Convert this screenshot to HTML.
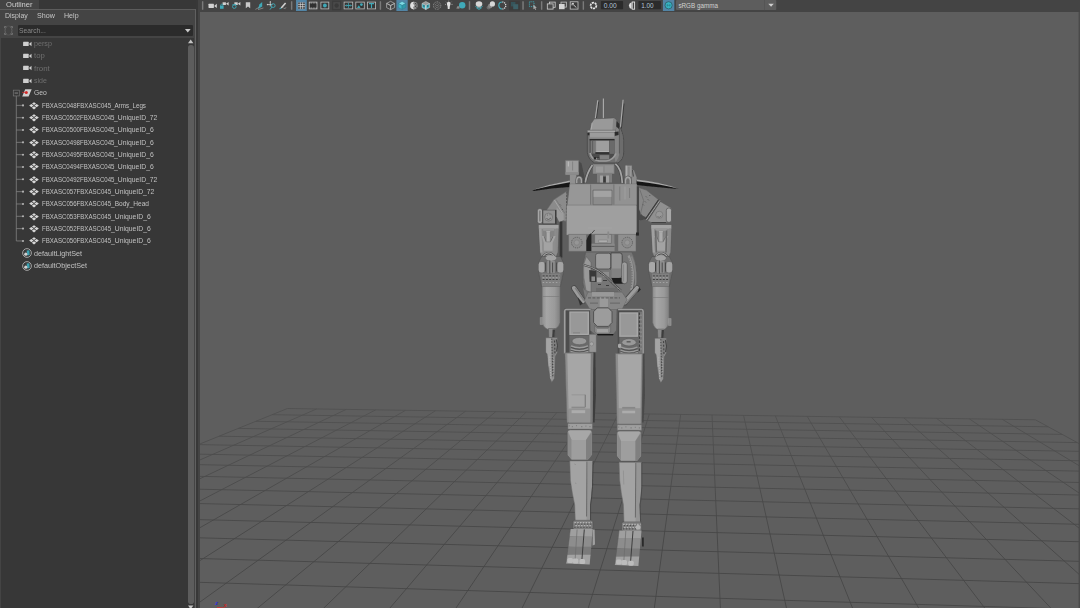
<!DOCTYPE html>
<html><head><meta charset="utf-8"><title>Outliner</title>
<style>
html,body{margin:0;padding:0;}
body{width:1080px;height:608px;overflow:hidden;background:#5e5e5e;position:relative;font-family:"Liberation Sans",sans-serif;font-size:7.5px;color:#c8c8c8;}
#vp{position:absolute;left:200px;top:11.5px;width:880px;height:596.5px;background:#5e5e5e;overflow:hidden;}
#vp svg{display:block;}
#tb{position:absolute;left:200px;top:0;width:880px;height:11.5px;background:#444;overflow:hidden;}
#tb svg{display:block;position:absolute;left:0;top:0;}
#lp{position:absolute;left:0;top:0;width:200px;height:608px;background:#444;overflow:hidden;}
#lp .topbar{position:absolute;left:0;top:0;width:197.9px;height:9.2px;background:#373737;}
#lp .tab{position:absolute;left:0;top:0;width:38.8px;height:9px;background:#444;}
#lp .tab span{position:absolute;top:-0.2px;line-height:9px;color:#cecece;white-space:nowrap;transform-origin:0 50%;}
#lp .hline{position:absolute;left:0;top:9px;width:196px;height:1px;background:#5c5c5c;}
#lp .vline{position:absolute;left:194.9px;top:9px;width:1.3px;height:599px;background:#606060;}
#lp .gap{position:absolute;left:196.2px;top:0;width:1.7px;height:608px;background:#383838;}
#lp .menu{position:absolute;left:0;top:10.1px;height:11px;line-height:11px;font-size:7.6px;color:#c6c6c6;white-space:nowrap;}
#lp .menu span{position:absolute;top:0;transform-origin:0 50%;}
#lp .sicon{position:absolute;left:2.5px;top:25px;}
#lp .search{position:absolute;left:17.5px;top:25.2px;width:175.6px;height:10.6px;background:#2b2b2b;border-radius:1px;}
#lp .search span{position:absolute;top:1.3px;line-height:10.6px;color:#8a8a8a;transform-origin:0 50%;white-space:nowrap;}
#lp .search i{position:absolute;right:2.6px;top:3.8px;width:0;height:0;border-left:2.9px solid transparent;border-right:2.9px solid transparent;border-top:3.6px solid #c4c4c4;}
#lp .list{position:absolute;left:1.2px;top:37.8px;width:192.5px;height:570.2px;background:#373737;}
#lp .sb{position:absolute;left:188.1px;top:45.3px;width:5.7px;height:558.6px;background:#5d5d5d;border-radius:2.8px;}
#lp .up{position:absolute;left:187.9px;top:39.6px;width:0;height:0;border-left:2.8px solid transparent;border-right:2.8px solid transparent;border-bottom:3.4px solid #c4c4c4;}
#lp .dn{position:absolute;left:187.9px;top:605.6px;width:0;height:0;border-left:2.8px solid transparent;border-right:2.8px solid transparent;border-top:3.4px solid #c4c4c4;}
.row{position:absolute;left:0;height:12.3px;line-height:12.3px;white-space:nowrap;font-size:7.45px;color:#c2c2c2;}
.row span{position:absolute;top:0.5px;transform-origin:0 50%;}
.row.dim{color:#6f6f6f;}
.row svg{position:absolute;}
#tree{position:absolute;left:0;top:0;}

</style></head>
<body>
<div id="vp">
<svg width="880" height="597" viewBox="200 11.5 880 597">
<defs>
<linearGradient id="cyl" x1="0" x2="1" y1="0" y2="0"><stop offset="0" stop-color="#8e8e8e"/><stop offset="0.25" stop-color="#a6a6a6"/><stop offset="0.7" stop-color="#9a9a9a"/><stop offset="1" stop-color="#808080"/></linearGradient>
<filter id="soft" x="-5%" y="-5%" width="110%" height="110%"><feGaussianBlur stdDeviation="0.35"/></filter>
<linearGradient id="gridg" gradientUnits="userSpaceOnUse" x1="0" y1="405" x2="0" y2="540"><stop offset="0" stop-color="#505050"/><stop offset="1" stop-color="#454545"/></linearGradient>
</defs>
<g stroke="url(#gridg)" stroke-width="0.85" fill="none"><line x1="287.4" y1="408.0" x2="150.0" y2="463.7"/><line x1="316.7" y1="408.4" x2="150.0" y2="481.3"/><line x1="346.2" y1="408.9" x2="150.0" y2="501.9"/><line x1="375.8" y1="409.3" x2="150.0" y2="526.3"/><line x1="405.6" y1="409.8" x2="150.0" y2="555.7"/><line x1="435.5" y1="410.2" x2="150.0" y2="591.9"/><line x1="465.6" y1="410.7" x2="150.0" y2="637.4"/><line x1="495.8" y1="411.1" x2="218.3" y2="640.0"/><line x1="526.2" y1="411.6" x2="290.3" y2="640.0"/><line x1="556.8" y1="412.1" x2="362.2" y2="640.0"/><line x1="587.5" y1="412.5" x2="434.1" y2="640.0"/><line x1="618.4" y1="413.0" x2="506.0" y2="640.0"/><line x1="649.4" y1="413.4" x2="578.0" y2="640.0"/><line x1="680.7" y1="413.9" x2="649.9" y2="640.0"/><line x1="712.0" y1="414.4" x2="721.8" y2="640.0"/><line x1="743.6" y1="414.9" x2="793.7" y2="640.0"/><line x1="775.3" y1="415.3" x2="865.6" y2="640.0"/><line x1="807.2" y1="415.8" x2="937.5" y2="640.0"/><line x1="839.3" y1="416.3" x2="1009.4" y2="640.0"/><line x1="871.5" y1="416.8" x2="1081.3" y2="640.0"/><line x1="903.9" y1="417.3" x2="1130.0" y2="619.3"/><line x1="936.5" y1="417.8" x2="1130.0" y2="566.8"/><line x1="969.3" y1="418.3" x2="1130.0" y2="527.0"/><line x1="1002.2" y1="418.8" x2="1130.0" y2="495.9"/><line x1="1035.4" y1="419.3" x2="1130.0" y2="470.8"/><line x1="287.4" y1="408.0" x2="1035.4" y2="419.3"/><line x1="272.2" y1="414.2" x2="1048.3" y2="426.3"/><line x1="255.8" y1="420.8" x2="1062.2" y2="433.9"/><line x1="238.2" y1="427.9" x2="1077.3" y2="442.1"/><line x1="219.1" y1="435.7" x2="1093.8" y2="451.1"/><line x1="198.4" y1="444.1" x2="1111.8" y2="460.9"/><line x1="175.8" y1="453.2" x2="1130.0" y2="471.6"/><line x1="151.1" y1="463.2" x2="1130.0" y2="483.0"/><line x1="150.0" y1="474.8" x2="1130.0" y2="495.6"/><line x1="150.0" y1="487.6" x2="1130.0" y2="509.5"/><line x1="150.0" y1="501.9" x2="1130.0" y2="525.0"/><line x1="150.0" y1="517.9" x2="1130.0" y2="542.5"/><line x1="150.0" y1="536.0" x2="1130.0" y2="562.2"/><line x1="150.0" y1="556.6" x2="1130.0" y2="584.6"/><line x1="150.0" y1="580.3" x2="1130.0" y2="610.4"/><line x1="150.0" y1="607.8" x2="1121.2" y2="640.0"/></g>
<g filter="url(#soft)"><g id="robot" stroke-linejoin="round">
<!-- antennas -->
<line x1="598.7" y1="101" x2="596.5" y2="117.6" stroke="#3c3c3c" stroke-width="1"/>
<line x1="624" y1="103" x2="621.4" y2="128" stroke="#3c3c3c" stroke-width="1"/>
<g stroke="#adadad" stroke-width="1.1" fill="none">
<line x1="597.8" y1="99.8" x2="595.3" y2="118"/>
<line x1="603.4" y1="97.9" x2="603.4" y2="118"/>
<line x1="623.1" y1="99.2" x2="620.3" y2="128.2"/>
</g>
<!-- head shell -->
<path d="M587.3 131 L587.3 152 Q588.5 159.5 594.7 162.5 L618 162.5 Q623.7 159 623.7 151.4 L623.7 139.6 Q622.5 128 616.5 121.5 L615.5 131 Z" fill="#6f6f6f" stroke="#484848" stroke-width="0.9"/>
<path d="M614.4 131 L616.4 122.5 Q619.6 127 619.4 139 L619.4 152 Q619 158 615.5 161.5 L614.4 156 Z" fill="#858585"/>
<path d="M619.4 128 Q623 133 623.2 140 L623.2 151 Q623 157 619 160.8 L619.4 152 Z" fill="#6c6c6c"/>
<path d="M619.4 127 L619.4 153" stroke="#4c4c4c" stroke-width="0.6"/>
<!-- cap -->
<path d="M589.7 129.9 L591.2 122.8 L594.2 118.4 L613.4 117.4 Q616.4 118.6 616.8 121.3 L615.4 130.2 Z" fill="#999" stroke="#585858" stroke-width="0.6"/>
<path d="M613.2 117.6 Q616.4 118.6 616.6 121.3 L615.4 130 L612.4 130 Z" fill="#868686"/>
<path d="M592.2 122.8 L591 129.8" stroke="#b4b4b4" stroke-width="0.7"/>
<path d="M616.6 120.4 L619.4 123.4 L619 128.5 L616.2 126 Z" fill="#2e2e2e"/>
<!-- brim -->
<rect x="587.3" y="129.7" width="28.2" height="2.5" fill="#a6a6a6" stroke="#5a5a5a" stroke-width="0.5"/>
<rect x="587.6" y="132.2" width="2.2" height="2.6" fill="#2c2c2c"/>
<path d="M614.6 131.6 L618.6 131 L618.6 134.6 L614.6 135.4 Z" fill="#2c2c2c"/>
<!-- visor -->
<rect x="589.7" y="132.2" width="24.7" height="6.4" fill="#9c9c9c"/>
<rect x="589.7" y="136.4" width="24.7" height="2.2" fill="#8e8e8e"/>
<!-- face cavity -->
<path d="M589.7 138.6 L614.4 138.6 L614.4 154 Q612 158.5 607 159.3 L597 159.3 Q591 158 589.7 152 Z" fill="#4c4c4c"/>
<rect x="589.7" y="138.4" width="24.7" height="1.6" fill="#2a2a2a"/>
<rect x="590.6" y="140" width="5" height="13" fill="#787878"/>
<path d="M592.6 140 V153" stroke="#505050" stroke-width="0.7"/>
<rect x="609.2" y="140" width="5.2" height="13.4" fill="#6a6a6a"/>
<rect x="595.8" y="140.1" width="13.2" height="11.3" fill="#9e9e9e"/>
<rect x="595.8" y="150.6" width="13.2" height="1" fill="#b2b2b2"/>
<path d="M595.8 140.1 V151.4" stroke="#8a8a8a" stroke-width="0.6"/>
<rect x="595.4" y="151.8" width="14" height="1.6" fill="#303030"/>
<path d="M590 152.5 Q592 159.6 599 160.3 L606 160.5 Q613 160 616 153" fill="none" stroke="#9a9a9a" stroke-width="1.7"/>
<rect x="593.8" y="156.6" width="5.6" height="2.4" fill="#262626"/>
<rect x="599.6" y="154.6" width="9.6" height="4.4" fill="#808080"/>
<rect x="596" y="157.2" width="0.8" height="1.8" fill="#aaa"/><rect x="597.6" y="157.2" width="0.8" height="1.8" fill="#aaa"/>
<!-- neck -->
<rect x="592.6" y="163.5" width="22" height="10" fill="#8b8b8b" stroke="#5a5a5a" stroke-width="0.5"/>
<rect x="596" y="166" width="7" height="6" fill="#9a9a9a"/>
<rect x="605" y="165" width="8" height="7" fill="#939393"/>
<rect x="597" y="173.5" width="15" height="8.5" fill="#7c7c7c"/>
<rect x="600" y="175" width="3" height="7" fill="#a0a0a0"/>
<rect x="606" y="175" width="3" height="7" fill="#a0a0a0"/>
<rect x="603.2" y="176" width="2.6" height="6" fill="#3a3a3a"/>
<!-- cables -->
<path d="M592.4 164.4 Q587 172 585.2 182" fill="none" stroke="#484848" stroke-width="3.2"/>
<path d="M592.4 164.4 Q587 172 585.2 182" fill="none" stroke="#a4a4a4" stroke-width="1.8"/>
<path d="M615.4 163.4 Q621.6 168 622.3 182.6" fill="none" stroke="#484848" stroke-width="3.2"/>
<path d="M615.4 163.4 Q621.6 168 622.3 182.6" fill="none" stroke="#a4a4a4" stroke-width="1.8"/>
<!-- left shoulder box -->
<path d="M578.7 160.6 L581.5 163 L584.4 176 L584.4 183 L578.7 183 Z" fill="#484848"/>
<rect x="565.4" y="159.9" width="13.3" height="14.3" fill="#9c9c9c" stroke="#6a6a6a" stroke-width="0.5"/>
<line x1="568.3" y1="161" x2="568.3" y2="166" stroke="#c4c4c4" stroke-width="0.9"/>
<line x1="572.6" y1="161" x2="572.6" y2="170" stroke="#7c7c7c" stroke-width="0.8"/>
<rect x="565.6" y="171.6" width="13" height="2.6" fill="#8c8c8c"/>
<path d="M569.9 174.2 L576.3 174.2 L577 184 L569.9 184 Z" fill="#909090"/>
<path d="M575.6 183 L575.6 179.4 Q575.8 175.4 579 175.4 Q582.4 175.4 582.6 179.4 L582.6 183 Z" fill="#a4a4a4" stroke="#4e4e4e" stroke-width="0.6"/>
<path d="M577.4 183 L577.4 180 Q577.6 177.6 579.1 177.6 Q580.6 177.6 580.8 180 L580.8 183 Z" fill="#6a6a6a"/>
<!-- right pegs -->
<path d="M631.6 168.8 L634 170 L636.6 177 L636.6 184.6 L631.6 184.6 Z" fill="#8c8c8c"/>
<path d="M632.4 169.5 L633.4 176" stroke="#3e3e3e" stroke-width="0.9"/>
<rect x="625.4" y="164.9" width="6.6" height="12" fill="#989898" stroke="#666" stroke-width="0.5"/>
<rect x="627.6" y="166" width="2.2" height="10" fill="#848484"/>
<rect x="625.6" y="165.2" width="1.6" height="11" fill="#ababab"/>
<path d="M624.3 184 L624.3 179.4 Q624.6 175.4 627.9 175.4 Q631.3 175.4 631.5 179.4 L631.5 184 Z" fill="#a4a4a4" stroke="#4e4e4e" stroke-width="0.6"/>
<path d="M626.2 184 L626.2 180 Q626.4 177.8 627.9 177.8 Q629.4 177.8 629.6 180 L629.6 184 Z" fill="#707070"/>
<!-- blades -->
<path d="M532.4 189.7 Q551 183.6 569.9 180.3 L569.6 186.6 Q551 187.6 534 190.6 Z" fill="#181818"/>
<path d="M532.4 189.6 Q551 183.4 569.9 180.1 L569.9 181.7 Q551 184.8 532.4 189.6 Z" fill="#acacac"/>
<path d="M636.6 179.5 Q660 181.8 679 188.4 Q660 187.4 636.6 184.6 Z" fill="#181818"/>
<path d="M636.6 179.1 Q660 181.4 679 188.4 Q660 183.6 636.6 180.8 Z" fill="#a8a8a8"/>
<!-- left shoulder -->
<path d="M567 190.6 L553.7 199.3 L546.5 209.8 L556.4 209.8 L562 219.6 L567.4 221.4 Z" fill="#8b8b8b" stroke="#666" stroke-width="0.5"/>
<path d="M554.4 199.6 L563.4 214" stroke="#a6a6a6" stroke-width="1"/>
<path d="M556 199 L565 213" stroke="#727272" stroke-width="0.7"/>
<path d="M566.8 191 L566.2 221" stroke="#4e4e4e" stroke-width="0.9" stroke-dasharray="2.2 1"/>
<path d="M560 204 l0.8 0.8 M562 208.6 l0.8 0.8" stroke="#444" stroke-width="0.8"/>
<!-- right shoulder -->
<path d="M638.6 187 L646.4 189.6 L658.4 199 L645 218.6 Q641 220.6 638.6 219.6 Z" fill="#878787" stroke="#585858" stroke-width="0.5"/>
<path d="M638.8 208 Q641 216 646 216.6 L644.6 218.8 Q641 220.6 638.8 219.4 Z" fill="#484848"/>
<path d="M639.8 189 L643.6 200 L640.4 214" fill="none" stroke="#6c6c6c" stroke-width="0.8"/>
<path d="M646 196 l0.8 0.8 M648 199 l0.8 0.8 M645 201 l0.8 0.8 M649.4 194.6 l0.8 0.8 M643 204 l0.8 0.8" stroke="#3e3e3e" stroke-width="0.8"/>
<path d="M658.6 199.2 L645.2 218.8" stroke="#363636" stroke-width="1"/>
<path d="M659.8 200 L646.4 219.6" stroke="#a8a8a8" stroke-width="0.9"/>
<path d="M660.6 200.6 L647.2 220.2" stroke="#444" stroke-width="0.7"/>
<!-- chest -->
<path d="M569.9 183.6 L636.6 183.6 L636.6 234.4 L566.4 234.4 L566.9 204.3 L567.4 204.3 Z" fill="#9a9a9a" stroke="#6a6a6a" stroke-width="0.6"/>
<rect x="636.6" y="186" width="2.4" height="49" fill="#444"/>
<path d="M570.2 184 L590.6 184 L590.6 204.3 L567.8 204.3 Z" fill="#979797"/>
<rect x="613.9" y="184" width="22.7" height="20.3" fill="#929292"/>
<rect x="590.6" y="184" width="23.3" height="20.3" fill="#8f8f8f"/>
<rect x="593" y="189.6" width="19" height="14.7" fill="#8c8c8c" stroke="#5c5c5c" stroke-width="0.6"/>
<rect x="593.6" y="190.2" width="17.8" height="6.2" fill="#a3a3a3"/>
<line x1="590.6" y1="184" x2="590.6" y2="204.3" stroke="#666" stroke-width="0.7"/>
<line x1="613.9" y1="184" x2="613.9" y2="204.3" stroke="#666" stroke-width="0.7"/>
<rect x="619.8" y="185.6" width="10.8" height="13" fill="#939393"/>
<line x1="619.8" y1="186" x2="619.8" y2="200" stroke="#6c6c6c" stroke-width="0.6"/>
<line x1="625" y1="186" x2="625" y2="199" stroke="#a8a8a8" stroke-width="0.6"/>
<line x1="629.6" y1="188" x2="629.6" y2="197" stroke="#5a5a5a" stroke-width="0.9" stroke-dasharray="1 1"/>
<line x1="567" y1="204.6" x2="636.6" y2="204.6" stroke="#787878" stroke-width="0.8"/>
<rect x="566.9" y="205.2" width="69.6" height="28.8" fill="#9f9f9f"/>
<line x1="588" y1="227.5" x2="612" y2="227.5" stroke="#aaa" stroke-width="0.6"/>
<!-- arm joints -->
<rect x="537.3" y="208.1" width="5.2" height="15" rx="2.2" fill="#a6a6a6" stroke="#4a4a4a" stroke-width="0.6"/>
<rect x="539" y="210" width="1.6" height="11" rx="0.8" fill="#7e7e7e"/>
<rect x="542.6" y="209.4" width="14" height="14.6" fill="#3e3e3e"/>
<rect x="543.2" y="209.8" width="11.8" height="13.2" fill="#929292"/>
<circle cx="548.6" cy="216.6" r="4" fill="#9a9a9a" stroke="#6a6a6a" stroke-width="0.6"/>
<path d="M546.4 218 Q548.6 220.4 551 217.4" fill="none" stroke="#4a4a4a" stroke-width="0.7"/>
<path d="M547 214.6 h0.8 M549.6 214.2 h0.8" stroke="#555" stroke-width="0.8"/>
<path d="M556.6 207 L563.6 214.6 L563.6 219.6 L559.4 222 L556.6 216 Z" fill="#9c9c9c"/>
<path d="M660.4 201 L671.4 207.4 L671.4 222 L651.2 222 L647.6 220.4 Z" fill="#909090" stroke="#585858" stroke-width="0.5"/>
<rect x="666.3" y="207.6" width="5.2" height="14.2" rx="2.2" fill="#a8a8a8" stroke="#4a4a4a" stroke-width="0.6"/>
<circle cx="659.3" cy="214.3" r="3.6" fill="#979797" stroke="#707070" stroke-width="0.6"/>
<path d="M657.4 216 Q659.4 218 661.4 215.4" fill="none" stroke="#555" stroke-width="0.6"/>
<path d="M651.4 222 H666" stroke="#3e3e3e" stroke-width="0.9"/>
<!-- upper arms -->
<rect x="559.6" y="221" width="2.7999999999999545" height="36" fill="#363636"/>
<path d="M538.5 224.2 L558.8 224.2 L557.8 252 L555.8 257.5 L541.9 257.5 L539.9 252 Z" fill="#8c8c8c" stroke="#555" stroke-width="0.5"/>
<rect x="538.8" y="224.5" width="19.699999999999953" height="3.6" fill="#a4a4a4"/>
<path d="M538.9 228 L541.5 228 L542.5 252 L540.3 252 Z" fill="#a0a0a0"/>
<path d="M558.4 228 L556.1999999999999 228 L555.4 252 L557.4 252 Z" fill="#8a8a8a"/>
<rect x="542.7" y="228.4" width="11.699999999999955" height="8" fill="#848484"/>
<rect x="543.1" y="228.8" width="10.899999999999954" height="1.2" fill="#a0a0a0"/>
<path d="M541.7 235.6 L543.85 242.4 L543.85 250.2 L552.65 250.2 L552.65 242.4 L555.5999999999999 235.6 L555.4 250 L542.3 250 Z" fill="#8e8e8e"/>
<path d="M541.7 235.4 L544.1 235.4 L546.25 241.4 L550.25 241.4 L553.1999999999999 235.4 L555.5999999999999 235.4 L552.65 242.6 L552.65 250.2 L543.85 250.2 L543.85 242.6 Z" fill="#a3a3a3"/>
<path d="M544.3 236 L546.05 241.2 M553.0 236 L550.45 241.2" stroke="#5a5a5a" stroke-width="0.7" fill="none"/>
<rect x="546.25" y="231.4" width="4" height="10" fill="#acacac" stroke="#6a6a6a" stroke-width="0.4"/>
<rect x="546.25" y="230.8" width="4" height="0.9" fill="#c0c0c0"/>
<path d="M541.9 257.6 Q548.25 247.6 555.8 257.6" fill="none" stroke="#3e3e3e" stroke-width="2.2"/>
<path d="M542.3 257 Q548.25 247.8 555.4 257" fill="none" stroke="#a4a4a4" stroke-width="1.1"/>
<path d="M651 224.2 L671.6 224.2 L670.6 252 L668.6 257.5 L654.4 257.5 L652.4 252 Z" fill="#8c8c8c" stroke="#555" stroke-width="0.5"/>
<rect x="651.3" y="224.5" width="20.00000000000002" height="3.6" fill="#a4a4a4"/>
<path d="M651.4 228 L654 228 L655 252 L652.8 252 Z" fill="#a0a0a0"/>
<path d="M671.2 228 L669.0 228 L668.2 252 L670.2 252 Z" fill="#8a8a8a"/>
<rect x="655.2" y="228.4" width="12.000000000000023" height="8" fill="#848484"/>
<rect x="655.6" y="228.8" width="11.200000000000022" height="1.2" fill="#a0a0a0"/>
<path d="M654.2 235.6 L656.5 242.4 L656.5 250.2 L665.3 250.2 L665.3 242.4 L668.4 235.6 L668.2 250 L654.8 250 Z" fill="#8e8e8e"/>
<path d="M654.2 235.4 L656.6 235.4 L658.9 241.4 L662.9 241.4 L666.0 235.4 L668.4 235.4 L665.3 242.6 L665.3 250.2 L656.5 250.2 L656.5 242.6 Z" fill="#a3a3a3"/>
<path d="M656.8 236 L658.6999999999999 241.2 M665.8000000000001 236 L663.1 241.2" stroke="#5a5a5a" stroke-width="0.7" fill="none"/>
<rect x="658.9" y="231.4" width="4" height="10" fill="#acacac" stroke="#6a6a6a" stroke-width="0.4"/>
<rect x="658.9" y="230.8" width="4" height="0.9" fill="#c0c0c0"/>
<path d="M654.4 257.6 Q660.9 247.6 668.6 257.6" fill="none" stroke="#3e3e3e" stroke-width="2.2"/>
<path d="M654.8 257 Q660.9 247.8 668.2 257" fill="none" stroke="#a4a4a4" stroke-width="1.1"/>
<path d="M655.6 230 L656.4 252 M666.6 230 L666 252" stroke="#686868" stroke-width="1.5" fill="none"/>
<!-- elbows -->
<path d="M541.6 256 L560.4 256 L563.4 262 L563.4 272 L560.4 286 L541.6 286 L538.6 272 L538.6 262 Z" fill="#6e6e6e" stroke="#4c4c4c" stroke-width="0.5"/>
<rect x="538.6" y="261.5" width="6.4" height="10.5" rx="2.4" fill="#a8a8a8"/>
<rect x="557.0" y="261.5" width="6.4" height="10.5" rx="2.4" fill="#a4a4a4"/>
<ellipse cx="551.0" cy="257.6" rx="5.4" ry="2.8" fill="#a2a2a2"/>
<rect x="547.2" y="260.4" width="7.6" height="12" fill="#8e8e8e"/>
<path d="M549.8 260 V274 M552.6 262 V272" stroke="#3a3a3a" stroke-width="0.8"/>
<path d="M545.2 262 V271 M556.8 262 V271" stroke="#333" stroke-width="0.8"/>
<path d="M541.6 273 L560.4 273 L560.0 286 L542.0 286 Z" fill="#808080"/>
<path d="M542.6 275.4 H559.4 M542.6 279 H559.4" stroke="#3c3c3c" stroke-width="0.9" stroke-dasharray="2 1.3"/>
<path d="M542.6 277.2 H559.4 M542.6 282 H559.4" stroke="#a6a6a6" stroke-width="0.9" stroke-dasharray="1.6 1.7"/>
<path d="M651.9 256 L669.3 256 L672.3 262 L672.3 272 L669.3 286 L651.9 286 L648.9 272 L648.9 262 Z" fill="#6e6e6e" stroke="#4c4c4c" stroke-width="0.5"/>
<rect x="648.9" y="261.5" width="6.4" height="10.5" rx="2.4" fill="#a8a8a8"/>
<rect x="665.9" y="261.5" width="6.4" height="10.5" rx="2.4" fill="#a4a4a4"/>
<ellipse cx="660.5999999999999" cy="257.6" rx="5.4" ry="2.8" fill="#a2a2a2"/>
<rect x="656.8" y="260.4" width="7.6" height="12" fill="#8e8e8e"/>
<path d="M659.3999999999999 260 V274 M662.1999999999999 262 V272" stroke="#3a3a3a" stroke-width="0.8"/>
<path d="M655.5 262 V271 M665.6999999999999 262 V271" stroke="#333" stroke-width="0.8"/>
<path d="M651.9 273 L669.3 273 L668.9 286 L652.3 286 Z" fill="#808080"/>
<path d="M652.9 275.4 H668.3 M652.9 279 H668.3" stroke="#3c3c3c" stroke-width="0.9" stroke-dasharray="2 1.3"/>
<path d="M652.9 277.2 H668.3 M652.9 282 H668.3" stroke="#a6a6a6" stroke-width="0.9" stroke-dasharray="1.6 1.7"/>
<!-- forearms -->
<path d="M542.2 286 L560 286 L560 322 Q558 329 551 329.5 Q544 329 542.2 322 Z" fill="url(#cyl)" stroke="#6a6a6a" stroke-width="0.5"/>
<rect x="540.2" y="317" width="2.6" height="7" fill="#8a8a8a" stroke="#aaa" stroke-width="0.4"/>
<line x1="542.5" y1="296" x2="560" y2="296" stroke="#777" stroke-width="0.6"/>
<path d="M652.6 286 L669 286 L669 322 Q667 329.5 660.8 330 Q654.5 329.5 652.6 322 Z" fill="url(#cyl)" stroke="#6a6a6a" stroke-width="0.5"/>
<rect x="668.5" y="318" width="2.6" height="7" fill="#8a8a8a" stroke="#aaa" stroke-width="0.4"/>
<line x1="652.6" y1="297" x2="669" y2="297" stroke="#777" stroke-width="0.6"/>
<!-- hands -->
<path d="M548.4 328 L555.2 328 L554.8000000000001 337 L548.8000000000001 337 Z" fill="#8a8a8a" stroke="#555" stroke-width="0.5"/>
<path d="M552.6 329 L555.0 329 L554.6 337 L552.2 337 Z" fill="#3e3e3e"/>
<path d="M545.7 337 L557.4 337 L557.4 352 L555.2 356 L555.0 367 L554.4 378 L551.8000000000001 382 L550.0 378 L548.4 367 L547.2 354 L545.7 352 Z" fill="#949494" stroke="#5a5a5a" stroke-width="0.5"/>
<path d="M546.2 338 L551.0 338 L551.0 352 L550.0 366 L548.6 366 L547.6 353 L546.2 351.4 Z" fill="#a4a4a4"/>
<path d="M552.2 338 L557.0 338 L557.0 351 L554.8000000000001 355 L554.4 372 L552.6 378 L551.8000000000001 366 Z" fill="#808080"/>
<path d="M551.8000000000001 338 L552.8000000000001 376" stroke="#333" stroke-width="0.8" stroke-dasharray="1.4 1.4"/>
<path d="M554.6 340 L555.0 354" stroke="#333" stroke-width="0.9" stroke-dasharray="2 1.6"/>
<path d="M553.6 357 L553.6 374" stroke="#b0b0b0" stroke-width="0.8" stroke-dasharray="1 1.6"/>
<path d="M549.8000000000001 356 L550.8000000000001 378" stroke="#b4b4b4" stroke-width="0.9" stroke-dasharray="1.4 1.2"/>
<path d="M556.4 339 Q558.4 345 556.6 351" fill="none" stroke="#3a3a3a" stroke-width="0.9"/>
<path d="M657.4 328.6 L664.2 328.6 L663.8000000000001 337.6 L657.8000000000001 337.6 Z" fill="#8a8a8a" stroke="#555" stroke-width="0.5"/>
<path d="M661.6 329.6 L664.0 329.6 L663.6 337.6 L661.2 337.6 Z" fill="#3e3e3e"/>
<path d="M654.7 337.6 L666.4 337.6 L666.4 352.6 L664.2 356.6 L664.0 367.6 L663.4 378.6 L660.8000000000001 382.6 L659.0 378.6 L657.4 367.6 L656.2 354.6 L654.7 352.6 Z" fill="#949494" stroke="#5a5a5a" stroke-width="0.5"/>
<path d="M655.2 338.6 L660.0 338.6 L660.0 352.6 L659.0 366.6 L657.6 366.6 L656.6 353.6 L655.2 352.0 Z" fill="#a4a4a4"/>
<path d="M661.2 338.6 L666.0 338.6 L666.0 351.6 L663.8000000000001 355.6 L663.4 372.6 L661.6 378.6 L660.8000000000001 366.6 Z" fill="#808080"/>
<path d="M660.8000000000001 338.6 L661.8000000000001 376.6" stroke="#333" stroke-width="0.8" stroke-dasharray="1.4 1.4"/>
<path d="M663.6 340.6 L664.0 354.6" stroke="#333" stroke-width="0.9" stroke-dasharray="2 1.6"/>
<path d="M662.6 357.6 L662.6 374.6" stroke="#b0b0b0" stroke-width="0.8" stroke-dasharray="1 1.6"/>
<path d="M658.8000000000001 356.6 L659.8000000000001 378.6" stroke="#b4b4b4" stroke-width="0.9" stroke-dasharray="1.4 1.2"/>
<path d="M665.4 339.6 Q667.4 345.6 665.6 351.6" fill="none" stroke="#3a3a3a" stroke-width="0.9"/>
<!-- under chest -->
<rect x="568.6" y="233.9" width="67.4" height="16.9" fill="#8f8f8f" stroke="#646464" stroke-width="0.5"/>
<rect x="586.2" y="234" width="32" height="16.8" fill="#6a6a6a"/>
<path d="M586.4 250.6 L586.4 240 Q587.6 235 591.4 232.6 L591.4 250.6 Z" fill="#222"/>
<path d="M591.8 232.8 L594.6 229.6" stroke="#2a2a2a" stroke-width="0.7"/>
<rect x="594.6" y="233.9" width="16.8" height="9" fill="#9a9a9a" stroke="#5e5e5e" stroke-width="0.5"/>
<rect x="598.6" y="239.6" width="8.8" height="2.2" fill="#b4b4b4" stroke="#6a6a6a" stroke-width="0.4"/>
<rect x="607.4" y="231" width="1.8" height="7" fill="#8a8a8a"/>
<rect x="611.6" y="234" width="2.8" height="13" fill="#858585"/>
<rect x="591.6" y="243.2" width="23" height="7.6" fill="#8a8a8a"/>
<rect x="591.6" y="245.4" width="23" height="1" fill="#5e5e5e"/>
<circle cx="576.8" cy="242.1" r="5.3" fill="#8c8c8c" stroke="#5c5c5c" stroke-width="0.9" stroke-dasharray="1.3 0.9"/>
<circle cx="576.8" cy="242.1" r="2.6" fill="#969696" stroke="#7a7a7a" stroke-width="0.5"/>
<circle cx="627.2" cy="242.1" r="5.3" fill="#8c8c8c" stroke="#5c5c5c" stroke-width="0.9" stroke-dasharray="1.3 0.9"/>
<circle cx="627.2" cy="242.1" r="2.6" fill="#969696" stroke="#7a7a7a" stroke-width="0.5"/>
<rect x="636" y="232" width="2.8" height="3" fill="#262626"/>
<!-- abdomen -->
<path d="M585.8 251.6 L632 251.6 Q637 262 636.4 272 L633 290 L628 297 L586 297 L582.8 282 L582.8 264 Z" fill="#747474" stroke="#555" stroke-width="0.5"/>
<path d="M583.6 264 Q582.8 277 586 290 L591 292 L591 262 L586.4 256 Z" fill="#999" stroke="#5e5e5e" stroke-width="0.5"/>
<path d="M589.2 269.4 L596.6 270.4 L596.6 281.6 L589.6 281.3 Z" fill="#383838"/>
<rect x="591.4" y="276" width="3.6" height="4.6" fill="#8c8c8c"/>
<rect x="595.6" y="252.7" width="15.3" height="15.8" rx="2.4" fill="#9b9b9b" stroke="#4e4e4e" stroke-width="0.8"/>
<path d="M611 252.4 L620 252.4 Q622.2 252.6 622.2 255 L622.2 274 Q622 277.4 619 277.4 L611 277.4 Z" fill="#939393" stroke="#3e3e3e" stroke-width="0.8"/>
<path d="M611.2 268 L622 268 L622 274 Q622 277.2 619 277.2 L611.2 277.2 Z" fill="#828282"/>
<path d="M611.4 277.6 L622.6 277.6 L625 283.2 L614 283.2 Z" fill="#1d1d1d"/>
<rect x="621.7" y="261.5" width="5.6" height="21.7" rx="2.7" fill="#9e9e9e" stroke="#4a4a4a" stroke-width="0.6"/>
<path d="M623.6 264 V281" stroke="#7c7c7c" stroke-width="0.7"/>
<path d="M628.6 255 Q635.4 270 631.4 290" fill="none" stroke="#949494" stroke-width="2.4"/>
<path d="M631.6 256 Q638.2 272 634.4 291" fill="none" stroke="#858585" stroke-width="1.6"/>
<path d="M629 258 Q634 270 631 288" fill="none" stroke="#555" stroke-width="0.7" stroke-dasharray="1.2 1.4"/>
<rect x="596.6" y="269.4" width="14.8" height="18" fill="#767676"/>
<rect x="597" y="277" width="4.6" height="4.8" fill="#a0a0a0"/>
<rect x="603" y="271.4" width="6" height="5" fill="#8d8d8d"/>
<path d="M598 284 h3 M603 280 h4 M606 285 h3 M600 273 h2" stroke="#3a3a3a" stroke-width="1"/>
<path d="M583.8 264.5 Q600 268 612 282 Q617 287 621 290" fill="none" stroke="#444" stroke-width="2"/>
<path d="M583.8 264.5 Q600 268 612 282 Q617 287 621 290" fill="none" stroke="#a2a2a2" stroke-width="0.9"/>
<rect x="596" y="287.4" width="22" height="4" fill="#6a6a6a"/>
<!-- hip struts -->
<path d="M583 287 L590.4 298 L586 303 Z" fill="#7a7a7a"/>
<line x1="574" y1="287.6" x2="582.9" y2="300.7" stroke="#4a4a4a" stroke-width="5.8" stroke-linecap="round"/>
<line x1="574" y1="287.6" x2="582.9" y2="300.7" stroke="#9c9c9c" stroke-width="4.2" stroke-linecap="round"/>
<line x1="575.2" y1="287.2" x2="584" y2="300" stroke="#808080" stroke-width="1.6"/>
<line x1="637" y1="287.6" x2="624.6" y2="302" stroke="#4a4a4a" stroke-width="5.8" stroke-linecap="round"/>
<line x1="637" y1="287.6" x2="624.6" y2="302" stroke="#9c9c9c" stroke-width="4.2" stroke-linecap="round"/>
<line x1="638.4" y1="288.6" x2="626" y2="303" stroke="#7e7e7e" stroke-width="1.4"/>
<path d="M639 287 L641 289 L637.4 292.4 Z" fill="#2c2c2c"/>
<path d="M577.6 296.6 L583 303 L580 305 Z" fill="#333"/>
<!-- pelvis top -->
<path d="M588 291.6 L622 291.6 L627 299 L622 309 L590 309 L584.4 300 Z" fill="#868686" stroke="#5c5c5c" stroke-width="0.5"/>
<rect x="592" y="291.6" width="22" height="4.2" fill="#999"/>
<rect x="599.6" y="297" width="8.4" height="9.6" fill="#9a9a9a"/>
<path d="M588 297.4 H620" stroke="#555" stroke-width="0.9" stroke-dasharray="3 1.4"/>
<path d="M590 302.6 H598 M610 302.6 H620" stroke="#5e5e5e" stroke-width="0.8"/>
<!-- hip frame -->
<rect x="564" y="308.2" width="27.4" height="44.4" fill="#4e4e4e"/>
<path d="M563.9 353 L563.9 310.4 Q563.9 308.2 566.4 308.2 L591 308.2 L591 309.8 L566 309.8 Q565.6 309.8 565.6 310.4 L565.6 353 Z" fill="#a6a6a6" stroke="#666" stroke-width="0.3"/>
<rect x="569.3" y="310.9" width="19.8" height="23.7" fill="#a8a8a8"/>
<rect x="570.6" y="312.2" width="17" height="21" fill="#989898"/>
<path d="M573 332.4 H580" stroke="#7a7a7a" stroke-width="0.7"/>
<rect x="569.4" y="335" width="20" height="17.6" fill="#6a6a6a"/>
<ellipse cx="579.4" cy="340.6" rx="7.4" ry="3.6" fill="#999" stroke="#555" stroke-width="0.5"/>
<path d="M571 345.4 Q579.4 349 588 345.4 M570.6 348.4 Q579.4 352 588.4 348.4 M570.6 350.8 Q579.4 354 588.4 350.8" fill="none" stroke="#9a9a9a" stroke-width="1.5"/>
<path d="M571 346.9 Q579.4 350.5 588 346.9 M570.6 349.7 Q579.4 353.2 588.4 349.7" fill="none" stroke="#3e3e3e" stroke-width="0.6"/>
<rect x="589.1" y="333.8" width="7.2" height="18" fill="#959595" stroke="#5e5e5e" stroke-width="0.4"/>
<circle cx="591.6" cy="343.4" r="2" fill="#a8a8a8" stroke="#6a6a6a" stroke-width="0.4"/>
<rect x="617.6" y="308.2" width="26.2" height="45.4" fill="#4e4e4e"/>
<path d="M643.9 354 L643.9 310.4 Q643.9 308.2 641.4 308.2 L618 308.2 L618 309.8 L641.8 309.8 Q642.2 309.8 642.2 310.4 L642.2 354 Z" fill="#a6a6a6" stroke="#666" stroke-width="0.3"/>
<rect x="638.2" y="311" width="4" height="42" fill="#777"/>
<path d="M639.4 312 V352" stroke="#3a3a3a" stroke-width="1" stroke-dasharray="2.4 1.6"/>
<path d="M641 314 V350" stroke="#a0a0a0" stroke-width="0.8" stroke-dasharray="1.6 2.6"/>
<rect x="619.2" y="311.8" width="18.8" height="24.6" fill="#a8a8a8"/>
<rect x="620.6" y="313.2" width="16" height="21.8" fill="#989898"/>
<rect x="619.4" y="336.6" width="18.8" height="17" fill="#6a6a6a"/>
<ellipse cx="629" cy="341.8" rx="7.2" ry="3.6" fill="#999" stroke="#555" stroke-width="0.5"/>
<rect x="626.6" y="340.6" width="4" height="1.4" fill="#5a5a5a"/>
<path d="M621 346.6 Q629 350.2 637.4 346.6 M620.6 349.6 Q629 353.2 637.8 349.6 M620.6 352 Q629 355 637.8 352" fill="none" stroke="#9a9a9a" stroke-width="1.5"/>
<path d="M621 348.1 Q629 351.7 637.4 348.1 M620.6 350.9 Q629 354.4 637.8 350.9" fill="none" stroke="#3e3e3e" stroke-width="0.6"/>
<rect x="618" y="343.2" width="3.2" height="4.4" rx="1.4" fill="#a8a8a8"/>
<!-- pelvis octagon -->
<path d="M590 309 L616.6 309 L616 330 L612 335 L597 335 L590.4 330 Z" fill="#787878"/>
<path d="M597.2 307.4 L608.4 307.4 L612 311.2 L612 322 L608.4 325.9 L597.2 325.9 L593.6 322 L593.6 311.2 Z" fill="#9c9c9c" stroke="#444" stroke-width="0.8"/>
<path d="M594.7 325 L597.2 327.6 L608.4 327.6 L610.6 325 L610.6 331.6 L608.4 333.2 L597.2 333.2 L594.7 331.6 Z" fill="#8c8c8c" stroke="#555" stroke-width="0.4"/>
<rect x="597" y="328.6" width="11" height="3.2" fill="#a2a2a2"/>
<path d="M597 333.4 L613.6 333.4 L613 335 L597.6 335 Z" fill="#161616"/>
<!-- thighs -->
<path d="M593.2 352 L595.4 352 L595.8 395 L594.6 422 L592.6 422 Z" fill="#3c3c3c"/>
<path d="M564.9 352.3 L593.2 352.3 L592.4 422.3 L567 422.3 Z" fill="#8d8d8d" stroke="#666" stroke-width="0.5"/>
<path d="M567.3 353.2 L590.8 353.2 L590.4 409 L568.6 409 Z" fill="#a6a6a6"/>
<path d="M590.9 352.6 L593.1 352.6 L592.3 422 L590.3 422 Z" fill="#7c7c7c"/>
<path d="M571.6 394.3 H585.2 V406.6 H571.6" fill="none" stroke="#8c8c8c" stroke-width="0.6"/>
<path d="M585.3 394.3 V406.6" stroke="#6e6e6e" stroke-width="0.7"/>
<path d="M568.6 408 L590.4 408 L590.2 422 L569 422 Z" fill="#939393"/>
<rect x="571.6" y="406.4" width="13.6" height="1.4" fill="#8a8a8a"/>
<rect x="571.6" y="409.7" width="13.6" height="3" fill="#acacac"/>
<path d="M642.6 353 L644.6 353 L645 395 L643.6 422 L641.8 422 Z" fill="#4a4a4a"/>
<path d="M615.4 353 L642.6 353 L641.6 423.4 L617 423.4 Z" fill="#8d8d8d" stroke="#666" stroke-width="0.5"/>
<path d="M617.9 354 L641.3 354 L640.4 408 L618.8 408 Z" fill="#a6a6a6"/>
<path d="M618.8 408 L640.4 408 L640.2 423 L619 423 Z" fill="#939393"/>
<rect x="622.2" y="406.4" width="13" height="1.8" fill="#878787"/>
<rect x="622.2" y="410.2" width="13" height="2.6" fill="#acacac"/>
<!-- knees -->
<rect x="567.9" y="423.0" width="24.500000000000092" height="5.6" fill="#9e9e9e" stroke="#6a6a6a" stroke-width="0.4"/>
<path d="M568.8 425.4 h1 m2 0.8 h1.2 m3 -1 h1 m4 1 h1.4 m3 -0.6 h1 m3 0.6 h1.2" stroke="#6a6a6a" stroke-width="0.7"/>
<path d="M567.3 432.0 Q567.3 429.0 570.3 429.0 L589.2 429.0 Q592.2 429.0 592.2 432.0 L592.2 454.4 L588.2 459.4 L571.3 459.4 L567.3 454.4 Z" fill="#9a9a9a" stroke="#555" stroke-width="0.7"/>
<path d="M568.3 430.4 L591.2 430.4 L586.0 439.5 L571.5999999999999 439.5 Z" fill="#a7a7a7"/>
<path d="M567.9 431.4 L571.5999999999999 439.5 L571.5999999999999 458.79999999999995 L567.9 454.4 Z" fill="#8a8a8a"/>
<path d="M591.6 431.4 L586.0 439.5 L586.0 458.79999999999995 L588.4000000000001 458.79999999999995 L591.6 454.4 Z" fill="#808080"/>
<rect x="571.5999999999999" y="439.5" width="14.400000000000091" height="19.399999999999977" fill="#9e9e9e"/>
<rect x="617.3000000000001" y="424.20000000000005" width="24.299999999999933" height="5.6" fill="#9e9e9e" stroke="#6a6a6a" stroke-width="0.4"/>
<path d="M618.2 426.6 h1 m2 0.8 h1.2 m3 -1 h1 m4 1 h1.4 m3 -0.6 h1 m3 0.6 h1.2" stroke="#6a6a6a" stroke-width="0.7"/>
<path d="M616.7 433.20000000000005 Q616.7 430.20000000000005 619.7 430.20000000000005 L638.4 430.20000000000005 Q641.4 430.20000000000005 641.4 433.20000000000005 L641.4 455.6 L637.4 460.6 L620.7 460.6 L616.7 455.6 Z" fill="#9a9a9a" stroke="#555" stroke-width="0.7"/>
<path d="M617.7 431.6 L640.4 431.6 L635.1999999999999 440.70000000000005 L621.0 440.70000000000005 Z" fill="#a7a7a7"/>
<path d="M617.3000000000001 432.6 L621.0 440.70000000000005 L621.0 460.0 L617.3000000000001 455.6 Z" fill="#8a8a8a"/>
<path d="M640.8 432.6 L635.1999999999999 440.70000000000005 L635.1999999999999 460.0 L637.6 460.0 L640.8 455.6 Z" fill="#808080"/>
<rect x="621.0" y="440.70000000000005" width="14.199999999999932" height="19.399999999999977" fill="#9e9e9e"/>
<!-- shins -->
<path d="M569.8 460.4 L592.6 460.4 L592 485.8 Q591.4 496 590.1 504.3 L590.1 521 L575.3 521 L574.7 504.3 Q572 492 570.4 479.7 Z" fill="#a3a3a3" stroke="#6a6a6a" stroke-width="0.5"/>
<path d="M587.4 461 L592.3 461 L591.7 485.8 Q591.1 496 589.8 504.3 L589.8 520.6 L586.6 520.6 L586.8 490 Z" fill="#959595"/>
<path d="M586.9 461 L586.6 516" stroke="#5c5c5c" stroke-width="0.8"/>
<path d="M593.1 461 L592.5 486 Q591.8 497 590.6 504.6 L590.6 520" fill="none" stroke="#3e3e3e" stroke-width="0.8"/>
<path d="M574.6 463.6 l0.9 0.4 M575.4 482.6 l0.8 0.3" stroke="#7a7a7a" stroke-width="0.7"/>
<path d="M619.1 461.8 L641.3 461.8 L641.3 485.8 Q640.8 496 639.5 504.3 L640.1 522 L624 522 L623.4 504.3 Q621 492 619.7 479.7 Z" fill="#a3a3a3" stroke="#6a6a6a" stroke-width="0.5"/>
<path d="M636.2 462.4 L641 462.4 L641 485.8 Q640.5 496 639.2 504.3 L639.8 521.6 L635.6 521.6 L635.6 490 Z" fill="#959595"/>
<path d="M635.8 462.4 L635.4 517" stroke="#5c5c5c" stroke-width="0.8"/>
<path d="M641.9 462.4 L641.9 486 Q641.3 497 640.1 504.6 L640.6 521" fill="none" stroke="#444" stroke-width="0.7"/>
<path d="M623.4 470 L623.8 484" stroke="#8c8c8c" stroke-width="0.7"/>
<!-- ankles -->
<rect x="572.8" y="519.8" width="20.199999999999978" height="9.2" rx="2" fill="#7e7e7e" stroke="#4e4e4e" stroke-width="0.5"/>
<path d="M574.4 522.1999999999999 H591.8 M575.4 525.1999999999999 H590.8" stroke="#b4b4b4" stroke-width="1.3" stroke-dasharray="1.5 1.3"/>
<path d="M575.1999999999999 523.5999999999999 H591.8 M574.4 526.8 H590.8" stroke="#3e3e3e" stroke-width="0.9" stroke-dasharray="1.1 1.9"/>
<path d="M570.4 528.4 L592.8 528.4 L592.1 536.7 L569.5 535.8 Z" fill="#9f9f9f"/>
<path d="M569.5 535.8 L592.1 535.8 L591.2 547.2 L568.2 546.3 Z" fill="#8d8d8d"/>
<path d="M568.2 546.3 L591.2 546.3 L590.5 555.2 L567.2 554.3 Z" fill="#7a7a7a"/>
<path d="M567.2 554.3 L590.5 554.3 L589.7 563.9 L566.1 563.0 Z" fill="#a2a2a2"/>
<path d="M584.3 528.9 L581.6 563.0" stroke="#3e3e3e" stroke-width="1"/>
<path d="M577.1 528.9 L574.9 562.4" stroke="#6c6c6c" stroke-width="0.7"/>
<rect x="567.4" y="557.5" width="5.6" height="5" rx="1.6" fill="#bcbcbc"/>
<rect x="572.8" y="558.0" width="5.6" height="5" rx="1.6" fill="#bcbcbc"/>
<rect x="579.5" y="558.6" width="5.6" height="5" rx="1.6" fill="#bcbcbc"/>
<path d="M570.4 528.4 L566.1 562.2" stroke="#5a5a5a" stroke-width="0.5"/>
<path d="M592.9 529 L594.6 529 L595 544 L592.6 545 Z" fill="#a0a0a0"/>
<rect x="621.5" y="521.4" width="20.199999999999978" height="9.2" rx="2" fill="#7e7e7e" stroke="#4e4e4e" stroke-width="0.5"/>
<path d="M623.1 523.8 H640.5 M624.1 526.8 H639.5" stroke="#b4b4b4" stroke-width="1.3" stroke-dasharray="1.5 1.3"/>
<path d="M623.9 525.1999999999999 H640.5 M623.1 528.4 H639.5" stroke="#3e3e3e" stroke-width="0.9" stroke-dasharray="1.1 1.9"/>
<circle cx="638.1" cy="526.8" r="2.5" fill="#b2b2b2"/>
<path d="M619.1 530.0 L641.5 530.0 L640.8 538.3 L618.2 537.4 Z" fill="#9f9f9f"/>
<path d="M618.2 537.4 L640.8 537.4 L639.9 548.8 L616.9 547.9 Z" fill="#8d8d8d"/>
<path d="M616.9 547.9 L639.9 547.9 L639.2 556.8 L615.9 555.9 Z" fill="#7a7a7a"/>
<path d="M615.9 555.9 L639.2 555.9 L638.4 565.5 L614.8 564.6 Z" fill="#a2a2a2"/>
<path d="M633.0 530.5 L630.3 564.6" stroke="#3e3e3e" stroke-width="1"/>
<path d="M625.8 530.5 L623.6 564.0" stroke="#6c6c6c" stroke-width="0.7"/>
<rect x="616.1" y="559.1" width="5.6" height="5" rx="1.6" fill="#bcbcbc"/>
<rect x="621.5" y="559.6" width="5.6" height="5" rx="1.6" fill="#bcbcbc"/>
<rect x="628.2" y="560.2" width="5.6" height="5" rx="1.6" fill="#bcbcbc"/>
<path d="M619.1 530.0 L614.8 563.8" stroke="#5a5a5a" stroke-width="0.5"/>
<rect x="642" y="537" width="1.8" height="9" fill="#2c2c2c"/>
</g>
</g>
<g id="axis">
<path d="M217 607 L225 607.5" stroke="#c83232" stroke-width="1"/>
<text x="215.3" y="604.6" font-family="Liberation Sans, sans-serif" font-size="5.4" font-weight="bold" font-style="italic" fill="#2a2ae0">z</text>
<text x="223.8" y="606.6" font-family="Liberation Sans, sans-serif" font-size="5.5" font-weight="bold" fill="#d02828">x</text>
</g>
<rect x="1078.6" y="11.5" width="1.4" height="597" fill="#4a4a4a"/>
</svg>
</div>
<div id="tb">
<svg width="880" height="11.5" viewBox="200 0 880 11.5" font-family="Liberation Sans, sans-serif">
<rect x="201.89999999999998" y="1" width="1.6" height="9" rx="0.8" fill="#6b6b6b"/><rect x="202.5" y="1.6" width="0.5" height="7.8" fill="#8a8a8a"/>
<rect x="290.9" y="1" width="1.6" height="9" rx="0.8" fill="#6b6b6b"/><rect x="291.5" y="1.6" width="0.5" height="7.8" fill="#8a8a8a"/>
<rect x="379.59999999999997" y="1" width="1.6" height="9" rx="0.8" fill="#6b6b6b"/><rect x="380.2" y="1.6" width="0.5" height="7.8" fill="#8a8a8a"/>
<rect x="468.7" y="1" width="1.6" height="9" rx="0.8" fill="#6b6b6b"/><rect x="469.3" y="1.6" width="0.5" height="7.8" fill="#8a8a8a"/>
<rect x="522.2" y="1" width="1.6" height="9" rx="0.8" fill="#6b6b6b"/><rect x="522.8" y="1.6" width="0.5" height="7.8" fill="#8a8a8a"/>
<rect x="540.9000000000001" y="1" width="1.6" height="9" rx="0.8" fill="#6b6b6b"/><rect x="541.5" y="1.6" width="0.5" height="7.8" fill="#8a8a8a"/>
<rect x="582.5" y="1" width="1.6" height="9" rx="0.8" fill="#6b6b6b"/><rect x="583.0999999999999" y="1.6" width="0.5" height="7.8" fill="#8a8a8a"/>
<rect x="208.5" y="3.8" width="5.4" height="4.2" rx="0.4" fill="#d2d2d2"/><path d="M214.1 5.9 L216.8 3.7 L216.8 8.1 Z" fill="#d2d2d2"/>
<rect x="222.6" y="2.3" width="3.3" height="2.7" fill="#d2d2d2"/><path d="M226 3.7 L228.6 1.9 L228.6 5.6 Z" fill="#d2d2d2"/><rect x="220" y="5.6" width="3.6" height="3.2" fill="#3fa9b8"/><path d="M220.7 5.8 L220.7 4.8 Q221.8 3.4 222.9 4.8 L222.9 5.8" fill="none" stroke="#3fa9b8" stroke-width="0.8"/>
<rect x="234.4" y="2.3" width="3.3" height="2.7" fill="#d2d2d2"/><path d="M237.8 3.7 L240.4 1.9 L240.4 5.6 Z" fill="#d2d2d2"/><circle cx="234.3" cy="6.6" r="1.8" fill="none" stroke="#3fa9b8" stroke-width="0.9"/><rect x="232.4" y="4.3" width="3.8" height="0.9" fill="#3fa9b8"/>
<path d="M245.8 2.3 L250.2 2.3 L250.2 8.2 L248 6.6 L245.8 8.2 Z" fill="#c9c9c9"/>
<path d="M259.4 4.6 L262.2 2 L262.2 6.6 L258 9 Z" fill="#3fa9b8"/><path d="M255.4 9.4 L259 7.4 M258 9.6 L263.4 8" stroke="#9a9a9a" stroke-width="0.7" fill="none"/>
<path d="M267 4.6 L272.4 4.6 M270.3 1.6 L270.3 6.4" stroke="#d2d2d2" stroke-width="0.8"/><path d="M270.3 1 L271.2 2.2 L269.4 2.2 Z" fill="#d2d2d2"/><path d="M266.6 4.6 L267.8 3.8 L267.8 5.4 Z" fill="#d2d2d2"/><circle cx="273.2" cy="5.6" r="1.9" fill="none" stroke="#3fa9b8" stroke-width="0.9"/><path d="M271.9 7.1 L270 9.6" stroke="#3fa9b8" stroke-width="1"/>
<path d="M280.6 7.6 L285 2.6 L286.2 3.6 L281.8 8.6 Z" fill="#d2d2d2"/><path d="M279 9.2 L280.4 7.6 L281.6 8.7 Z" fill="#3fa9b8"/><path d="M283.4 8 Q285.6 9.8 286 7.2" fill="none" stroke="#9a9a9a" stroke-width="0.7"/>
<rect x="296" y="0" width="10.8" height="11" fill="#5285a6"/><rect x="298" y="2.2" width="7" height="6.8" fill="#3b3b3b"/><path d="M298 4.4 H305 M298 6.7 H305 M300.3 2.2 V9 M302.7 2.2 V9" stroke="#e0e0e0" stroke-width="0.7"/><rect x="298" y="2.2" width="7" height="6.8" fill="none" stroke="#9ab" stroke-width="0.4"/>
<rect x="309.2" y="2.1" width="7.8" height="6.8" fill="#303030" stroke="#cfcfcf" stroke-width="0.7"/><path d="M309.6 3 H316.8 M309.6 8 H316.8" stroke="#cfcfcf" stroke-width="0.8" stroke-dasharray="0.9 0.7"/>
<rect x="320.9" y="2.1" width="7.9" height="6.8" fill="#3a3a3a" stroke="#bdbdbd" stroke-width="0.8"/><circle cx="324.9" cy="5.5" r="1.9" fill="#3fa9b8"/>
<rect x="332" y="0.5" width="9.2" height="9.8" fill="#3c3c3c"/><rect x="333.2" y="2.1" width="6.8" height="6.8" fill="#4a4a4a"/><circle cx="336.6" cy="5.5" r="2.2" fill="#3a3a3a"/>
<rect x="344.1" y="2.1" width="8.6" height="6.8" fill="#353535" stroke="#bdbdbd" stroke-width="0.8"/><path d="M345 5.5 H351.8 M348.4 2.8 V8.2" stroke="#3fa9b8" stroke-width="0.8"/><path d="M346.4 4.4 L347.4 5.5 L346.4 6.6 M350.4 4.4 L349.4 5.5 L350.4 6.6" stroke="#3fa9b8" stroke-width="0.6" fill="none"/>
<rect x="355.8" y="2.1" width="8.5" height="6.8" fill="#353535" stroke="#bdbdbd" stroke-width="0.8"/><circle cx="361.4" cy="4.6" r="1.4" fill="#3fa9b8"/><path d="M357 8 L358.8 5.2 L360.6 8 Z" fill="#3fa9b8"/>
<rect x="367.4" y="2.1" width="8.2" height="6.8" fill="#353535" stroke="#bdbdbd" stroke-width="0.8"/><path d="M369 3.6 H374 M371.5 3.6 V8" stroke="#3fa9b8" stroke-width="1.1"/>
<path d="M390.6 1.2999999999999998 L394.6 3.4 L390.6 5.5 L386.6 3.4 Z" fill="none" stroke="#b8b8b8" stroke-width="0.7" stroke-linejoin="round"/><path d="M386.6 3.4 L390.6 5.5 L390.6 9.7 L386.6 7.6 Z" fill="none" stroke="#b8b8b8" stroke-width="0.7" stroke-linejoin="round"/><path d="M394.6 3.4 L390.6 5.5 L390.6 9.7 L394.6 7.6 Z" fill="none" stroke="#b8b8b8" stroke-width="0.7" stroke-linejoin="round"/>
<rect x="396.4" y="0" width="11.3" height="11" fill="#5285a6"/>
<path d="M402.1 1.5100000000000002 L405.90000000000003 3.505 L402.1 5.5 L398.3 3.505 Z" fill="#7fdbe6" stroke="#2f7f8e" stroke-width="0.5" stroke-linejoin="round"/><path d="M398.3 3.505 L402.1 5.5 L402.1 9.49 L398.3 7.495 Z" fill="#3fb5c6" stroke="#2f7f8e" stroke-width="0.5" stroke-linejoin="round"/><path d="M405.90000000000003 3.505 L402.1 5.5 L402.1 9.49 L405.90000000000003 7.495 Z" fill="#2f9aab" stroke="#2f7f8e" stroke-width="0.5" stroke-linejoin="round"/>
<circle cx="414" cy="5.6" r="3.8" fill="#8a8a8a"/><path d="M414 1.8 A3.8 3.8 0 0 0 414 9.4 L413 7.6 L414.4 5.6 L413 3.6 Z" fill="#e0e0e0"/><path d="M415 3 h1.2 v1.2 h-1.2 Z M416.2 4.4 h1.2 v1.2 h-1.2 Z M415 5.8 h1.2 v1.2 h-1.2 Z M416.2 7.2 h1.2 v1 h-1.2 Z" fill="#444"/>
<path d="M425.8 1.5100000000000002 L429.6 3.505 L425.8 5.5 L422.0 3.505 Z" fill="#9a9a9a" stroke="#c4c4c4" stroke-width="0.6" stroke-linejoin="round"/><path d="M422.0 3.505 L425.8 5.5 L425.8 9.49 L422.0 7.495 Z" fill="#3fb5c6" stroke="#c4c4c4" stroke-width="0.6" stroke-linejoin="round"/><path d="M429.6 3.505 L425.8 5.5 L425.8 9.49 L429.6 7.495 Z" fill="#3fb5c6" stroke="#c4c4c4" stroke-width="0.6" stroke-linejoin="round"/>
<path d="M425.8 5.5 V9.4" stroke="#d8d8d8" stroke-width="0.9"/><rect x="423.2" y="5.2" width="1.4" height="1.6" fill="#2a6a75"/><rect x="427" y="5.2" width="1.4" height="1.6" fill="#2a6a75"/>
<circle cx="437.1" cy="5.6" r="3.7" fill="none" stroke="#9a9a9a" stroke-width="1" stroke-dasharray="0.9 0.8"/><circle cx="437.1" cy="5.6" r="2" fill="none" stroke="#8c8c8c" stroke-width="1" stroke-dasharray="0.8 0.8"/><circle cx="437.1" cy="5.6" r="0.6" fill="#999"/>
<path d="M448.7 1.8 Q451 2.2 450.4 4.6 L449.8 6.4 L449.6 9 L447.8 9 L447.6 6.4 L447 4.6 Q446.4 2.2 448.7 1.8 Z" fill="#e2e2e2"/><path d="M448.7 0.6 V1.4 M445 4.4 H446 M451.4 4.4 H452.6 M446 1.8 L446.6 2.4 M451.4 1.8 L450.8 2.4" stroke="#d0d0d0" stroke-width="0.6"/>
<circle cx="462.2" cy="5.3" r="3.2" fill="#3fa9b8"/><path d="M456.2 8.6 L457.6 6 L459.6 6.6 L459.4 8.8 Z" fill="#8a8a8a"/>
<ellipse cx="479" cy="4" rx="3.3" ry="2.7" fill="#d6d6d6"/><path d="M475.4 6.4 L479 8.2 L482.6 6.4 M476.4 8 L479 9.4 L481.6 8" fill="none" stroke="#3fa9b8" stroke-width="0.9"/><path d="M477.4 6 h3.2 v1.4 h-3.2 Z" fill="#bcbcbc"/>
<circle cx="488.6" cy="7.6" r="2" fill="#6a6a6a"/><circle cx="490.2" cy="6" r="2.3" fill="#858585"/><circle cx="492.4" cy="3.9" r="2.6" fill="#d6d6d6"/>
<path d="M502.3 2 A3.5 3.5 0 0 0 502.3 9" fill="none" stroke="#3fa9b8" stroke-width="1.2"/><path d="M502.3 2 A3.5 3.5 0 0 1 502.3 9" fill="none" stroke="#e0e0e0" stroke-width="1.2" stroke-dasharray="1.1 0.8"/>
<rect x="509" y="0.5" width="10.8" height="10" fill="#3b3b3b"/><rect x="511" y="2" width="4.4" height="4.4" fill="#35545a"/><rect x="513.2" y="4.2" width="5" height="5" fill="#3d6067"/>
<rect x="529.4" y="1.8" width="4.6" height="4.8" fill="none" stroke="#3fa9b8" stroke-width="0.9" stroke-dasharray="1.1 0.8"/><path d="M533.4 4.4 L536.8 7.8 L535.4 8 L536.2 9.6 L535.4 9.9 L534.6 8.4 L533.4 9.2 Z" fill="#a8a8a8"/>
<rect x="549.4" y="2.1" width="5.8" height="5.2" fill="#4a4a4a" stroke="#d0d0d0" stroke-width="0.8"/><rect x="547.3" y="3.9" width="5.8" height="5.2" fill="#4a4a4a" stroke="#d0d0d0" stroke-width="0.8"/>
<rect x="561" y="2.1" width="5.4" height="5" fill="#4a4a4a" stroke="#bdbdbd" stroke-width="0.8"/><rect x="559" y="4" width="5.6" height="5.2" fill="#d4d4d4"/>
<rect x="570.2" y="1.8" width="7.8" height="7.3" fill="#3a3a3a" stroke="#c6c6c6" stroke-width="0.8"/><path d="M572 3.4 L576.4 7.6 M572 3.4 L572 5.4 M572 3.4 L574 3.4" stroke="#d8d8d8" stroke-width="0.9" fill="none"/>
<circle cx="593.5" cy="5.6" r="2.9" fill="none" stroke="#e4e4e4" stroke-width="1.7" stroke-dasharray="2.2 0.7"/>
<rect x="600.9" y="0.9" width="22.200000000000045" height="8.3" rx="0.8" fill="#2b2b2b"/><text x="0" y="0" font-size="7.2" fill="#b4c4d8" transform="translate(603.7 7.7) scale(0.9206 1)">0.00</text>
<path d="M631.6 2.2 A3.5 3.5 0 0 0 631.6 9 Z" fill="#e0e0e0"/><rect x="632.2" y="2" width="2.4" height="7.2" fill="none" stroke="#e0e0e0" stroke-width="0.9"/>
<rect x="638.4" y="0.9" width="22.5" height="8.3" rx="0.8" fill="#2b2b2b"/><text x="0" y="0" font-size="7.2" fill="#b4c4d8" transform="translate(641.2 7.7) scale(0.8920 1)">1.00</text>
<rect x="662.9" y="0" width="11.4" height="11" fill="#5285a6"/><circle cx="668.6" cy="5.3" r="3.6" fill="#35b3c2" stroke="#2a5058" stroke-width="0.7"/><path d="M666.6 5.3 h4 M667.4 4 v2.6 M669.8 4 v2.6" stroke="#2a7a86" stroke-width="0.6"/>
<rect x="676" y="0" width="100.3" height="10.1" rx="1" fill="#5d5d5d"/><rect x="764" y="0" width="0.6" height="10.1" fill="#505050"/><text font-size="7.3" fill="#d0d0d0" transform="translate(678.4 7.6) scale(0.8639 1)">sRGB gamma</text><path d="M768.3 3.8 L773.8 3.8 L771.05 6.8 Z" fill="#d0d0d0"/>
</svg>
</div>
<div id="lp">
<div class="topbar"></div><div class="tab"><span class="" style="left:5.6px;font-size:7.3px;transform:scaleX(1.0407)">Outliner</span></div><div class="hline"></div><div class="vline"></div><div class="gap"></div>
<div class="menu"><span class="" style="left:5px;font-size:7.4px;transform:scaleX(0.9376)">Display</span><span class="" style="left:37.1px;font-size:7.4px;transform:scaleX(0.9670)">Show</span><span class="" style="left:64.4px;font-size:7.4px;transform:scaleX(0.9593)">Help</span></div>
<svg class="sicon" width="11" height="11" viewBox="0 0 11 11"><g fill="none" stroke="#666" stroke-width="0.9"><path d="M3.6 1.8 Q0.4 5.5 3.6 9.2"/><path d="M7.4 1.8 Q10.6 5.5 7.4 9.2"/><path d="M3.4 1.4 Q5.5 0.6 7.6 1.4" stroke="#555"/><path d="M3.4 9.6 Q5.5 10.4 7.6 9.6" stroke="#555"/></g><g fill="#7c7c7c"><path d="M1.2 1.2 L3.6 1.2 L1.2 3.4 Z"/><path d="M9.8 1.2 L7.4 1.2 L9.8 3.4 Z"/><path d="M1.2 9.8 L3.6 9.8 L1.2 7.6 Z"/><path d="M9.8 9.8 L7.4 9.8 L9.8 7.6 Z"/></g></svg>
<div class="search"><span class="" style="left:1.3px;font-size:7.3px;transform:scaleX(0.9174)">Search...</span></div>
<div class="list"></div><div class="sb"></div>
<svg style="position:absolute;left:0;top:0" width="200" height="608" viewBox="0 0 200 608"><path d="M184.9 28.9 L190.7 28.9 L187.8 32.5 Z" fill="#cacaca"/><path d="M188 43.2 L193.4 43.2 L190.7 39.6 Z" fill="#c4c4c4"/><path d="M188 605.6 L193.4 605.6 L190.7 609.2 Z" fill="#c4c4c4"/></svg>
<svg id="tree" width="60" height="300" viewBox="0 0 60 300"><g stroke="#8c8c8c" stroke-width="0.7" fill="none"><path d="M16.3 95.85 L16.3 240.95"/><path d="M16.3 105.38 L22.6 105.38"/><path d="M16.3 117.70 L22.6 117.70"/><path d="M16.3 130.02 L22.6 130.02"/><path d="M16.3 142.35 L22.6 142.35"/><path d="M16.3 154.68 L22.6 154.68"/><path d="M16.3 167.00 L22.6 167.00"/><path d="M16.3 179.32 L22.6 179.32"/><path d="M16.3 191.65 L22.6 191.65"/><path d="M16.3 203.97 L22.6 203.97"/><path d="M16.3 216.30 L22.6 216.30"/><path d="M16.3 228.62 L22.6 228.62"/><path d="M16.3 240.95 L22.6 240.95"/></g><circle cx="23" cy="105.38" r="1.05" fill="#b4b4b4"/><circle cx="23" cy="117.70" r="1.05" fill="#b4b4b4"/><circle cx="23" cy="130.02" r="1.05" fill="#b4b4b4"/><circle cx="23" cy="142.35" r="1.05" fill="#b4b4b4"/><circle cx="23" cy="154.68" r="1.05" fill="#b4b4b4"/><circle cx="23" cy="167.00" r="1.05" fill="#b4b4b4"/><circle cx="23" cy="179.32" r="1.05" fill="#b4b4b4"/><circle cx="23" cy="191.65" r="1.05" fill="#b4b4b4"/><circle cx="23" cy="203.97" r="1.05" fill="#b4b4b4"/><circle cx="23" cy="216.30" r="1.05" fill="#b4b4b4"/><circle cx="23" cy="228.62" r="1.05" fill="#b4b4b4"/><circle cx="23" cy="240.95" r="1.05" fill="#b4b4b4"/><rect x="13.3" y="90.15" width="6" height="5.8" fill="#373737" stroke="#777" stroke-width="0.7"/><path d="M14.6 93.05 L18 93.05" stroke="#aaa" stroke-width="0.7"/></svg>
<div class="row dim" style="top:37.59px"><svg style="left:22.8px;top:3.2px" width="9" height="6" viewBox="0 0 9 6"><rect x="0.1" y="0.8" width="5.6" height="4.3" rx="0.4" fill="#cfcfcf"/><path d="M5.9 3 L8.5 0.7 L8.5 5.3 Z" fill="#cfcfcf"/></svg><span class="" style="left:34px;font-size:7.05px;transform:scaleX(1.0150)">persp</span></div>
<div class="row dim" style="top:49.91px"><svg style="left:22.8px;top:3.2px" width="9" height="6" viewBox="0 0 9 6"><rect x="0.1" y="0.8" width="5.6" height="4.3" rx="0.4" fill="#cfcfcf"/><path d="M5.9 3 L8.5 0.7 L8.5 5.3 Z" fill="#cfcfcf"/></svg><span class="" style="left:34px;font-size:7.05px;transform:scaleX(1.0969)">top</span></div>
<div class="row dim" style="top:62.24px"><svg style="left:22.8px;top:3.2px" width="9" height="6" viewBox="0 0 9 6"><rect x="0.1" y="0.8" width="5.6" height="4.3" rx="0.4" fill="#cfcfcf"/><path d="M5.9 3 L8.5 0.7 L8.5 5.3 Z" fill="#cfcfcf"/></svg><span class="" style="left:34px;font-size:7.05px;transform:scaleX(1.1165)">front</span></div>
<div class="row dim" style="top:74.56px"><svg style="left:22.8px;top:3.2px" width="9" height="6" viewBox="0 0 9 6"><rect x="0.1" y="0.8" width="5.6" height="4.3" rx="0.4" fill="#cfcfcf"/><path d="M5.9 3 L8.5 0.7 L8.5 5.3 Z" fill="#cfcfcf"/></svg><span class="" style="left:34px;font-size:7.05px;transform:scaleX(0.9974)">side</span></div>
<div class="row" style="top:86.89px"><svg style="left:22.2px;top:2.3px" width="10" height="8" viewBox="0 0 10 8"><path d="M3.2 0.3 L9.7 0.3 L6.6 7.6 L0.2 7.6 Z" fill="#d0d0d0"/><path d="M0 3.4 L3 3.4" stroke="#d03030" stroke-width="0.7"/><circle cx="4.3" cy="3.5" r="1.5" fill="#d42a2a"/></svg><span class="" style="left:34px;font-size:7.05px;transform:scaleX(0.9681)">Geo</span></div>
<div class="row" style="top:99.21px"><svg style="left:29.2px;top:2.4px" width="10" height="8" viewBox="0 0 10 8"><g fill="#d8d8d8"><path d="M5 0.2 L7 1.6 L5 3 L3 1.6 Z"/><path d="M2.4 2 L4.6 3.6 L2.4 5.2 L0.2 3.6 Z"/><path d="M7.6 2 L9.8 3.6 L7.6 5.2 L5.4 3.6 Z"/><path d="M5 4.2 L7.2 5.8 L5 7.4 L2.8 5.8 Z"/></g></svg><span class="" style="left:41.6px;font-size:7.05px;transform:scaleX(0.8650)">FBXASC048FBXASC045</span><span class="" style="left:110.75px;font-size:7.05px;transform:scaleX(0.8843)">_Arms_Legs</span></div>
<div class="row" style="top:111.54px"><svg style="left:29.2px;top:2.4px" width="10" height="8" viewBox="0 0 10 8"><g fill="#d8d8d8"><path d="M5 0.2 L7 1.6 L5 3 L3 1.6 Z"/><path d="M2.4 2 L4.6 3.6 L2.4 5.2 L0.2 3.6 Z"/><path d="M7.6 2 L9.8 3.6 L7.6 5.2 L5.4 3.6 Z"/><path d="M5 4.2 L7.2 5.8 L5 7.4 L2.8 5.8 Z"/></g></svg><span class="" style="left:41.6px;font-size:7.05px;transform:scaleX(0.8645)">FBXASC0502FBXASC045</span><span class="" style="left:114.1px;font-size:7.05px;transform:scaleX(0.9628)">_UniqueID_72</span></div>
<div class="row" style="top:123.86px"><svg style="left:29.2px;top:2.4px" width="10" height="8" viewBox="0 0 10 8"><g fill="#d8d8d8"><path d="M5 0.2 L7 1.6 L5 3 L3 1.6 Z"/><path d="M2.4 2 L4.6 3.6 L2.4 5.2 L0.2 3.6 Z"/><path d="M7.6 2 L9.8 3.6 L7.6 5.2 L5.4 3.6 Z"/><path d="M5 4.2 L7.2 5.8 L5 7.4 L2.8 5.8 Z"/></g></svg><span class="" style="left:41.6px;font-size:7.05px;transform:scaleX(0.8645)">FBXASC0500FBXASC045</span><span class="" style="left:114.1px;font-size:7.05px;transform:scaleX(0.9671)">_UniqueID_6</span></div>
<div class="row" style="top:136.19px"><svg style="left:29.2px;top:2.4px" width="10" height="8" viewBox="0 0 10 8"><g fill="#d8d8d8"><path d="M5 0.2 L7 1.6 L5 3 L3 1.6 Z"/><path d="M2.4 2 L4.6 3.6 L2.4 5.2 L0.2 3.6 Z"/><path d="M7.6 2 L9.8 3.6 L7.6 5.2 L5.4 3.6 Z"/><path d="M5 4.2 L7.2 5.8 L5 7.4 L2.8 5.8 Z"/></g></svg><span class="" style="left:41.6px;font-size:7.05px;transform:scaleX(0.8645)">FBXASC0498FBXASC045</span><span class="" style="left:114.1px;font-size:7.05px;transform:scaleX(0.9671)">_UniqueID_6</span></div>
<div class="row" style="top:148.51px"><svg style="left:29.2px;top:2.4px" width="10" height="8" viewBox="0 0 10 8"><g fill="#d8d8d8"><path d="M5 0.2 L7 1.6 L5 3 L3 1.6 Z"/><path d="M2.4 2 L4.6 3.6 L2.4 5.2 L0.2 3.6 Z"/><path d="M7.6 2 L9.8 3.6 L7.6 5.2 L5.4 3.6 Z"/><path d="M5 4.2 L7.2 5.8 L5 7.4 L2.8 5.8 Z"/></g></svg><span class="" style="left:41.6px;font-size:7.05px;transform:scaleX(0.8645)">FBXASC0495FBXASC045</span><span class="" style="left:114.1px;font-size:7.05px;transform:scaleX(0.9671)">_UniqueID_6</span></div>
<div class="row" style="top:160.84px"><svg style="left:29.2px;top:2.4px" width="10" height="8" viewBox="0 0 10 8"><g fill="#d8d8d8"><path d="M5 0.2 L7 1.6 L5 3 L3 1.6 Z"/><path d="M2.4 2 L4.6 3.6 L2.4 5.2 L0.2 3.6 Z"/><path d="M7.6 2 L9.8 3.6 L7.6 5.2 L5.4 3.6 Z"/><path d="M5 4.2 L7.2 5.8 L5 7.4 L2.8 5.8 Z"/></g></svg><span class="" style="left:41.6px;font-size:7.05px;transform:scaleX(0.8645)">FBXASC0494FBXASC045</span><span class="" style="left:114.1px;font-size:7.05px;transform:scaleX(0.9671)">_UniqueID_6</span></div>
<div class="row" style="top:173.16px"><svg style="left:29.2px;top:2.4px" width="10" height="8" viewBox="0 0 10 8"><g fill="#d8d8d8"><path d="M5 0.2 L7 1.6 L5 3 L3 1.6 Z"/><path d="M2.4 2 L4.6 3.6 L2.4 5.2 L0.2 3.6 Z"/><path d="M7.6 2 L9.8 3.6 L7.6 5.2 L5.4 3.6 Z"/><path d="M5 4.2 L7.2 5.8 L5 7.4 L2.8 5.8 Z"/></g></svg><span class="" style="left:41.6px;font-size:7.05px;transform:scaleX(0.8645)">FBXASC0492FBXASC045</span><span class="" style="left:114.1px;font-size:7.05px;transform:scaleX(0.9628)">_UniqueID_72</span></div>
<div class="row" style="top:185.49px"><svg style="left:29.2px;top:2.4px" width="10" height="8" viewBox="0 0 10 8"><g fill="#d8d8d8"><path d="M5 0.2 L7 1.6 L5 3 L3 1.6 Z"/><path d="M2.4 2 L4.6 3.6 L2.4 5.2 L0.2 3.6 Z"/><path d="M7.6 2 L9.8 3.6 L7.6 5.2 L5.4 3.6 Z"/><path d="M5 4.2 L7.2 5.8 L5 7.4 L2.8 5.8 Z"/></g></svg><span class="" style="left:41.6px;font-size:7.05px;transform:scaleX(0.8650)">FBXASC057FBXASC045</span><span class="" style="left:110.75px;font-size:7.05px;transform:scaleX(0.9628)">_UniqueID_72</span></div>
<div class="row" style="top:197.81px"><svg style="left:29.2px;top:2.4px" width="10" height="8" viewBox="0 0 10 8"><g fill="#d8d8d8"><path d="M5 0.2 L7 1.6 L5 3 L3 1.6 Z"/><path d="M2.4 2 L4.6 3.6 L2.4 5.2 L0.2 3.6 Z"/><path d="M7.6 2 L9.8 3.6 L7.6 5.2 L5.4 3.6 Z"/><path d="M5 4.2 L7.2 5.8 L5 7.4 L2.8 5.8 Z"/></g></svg><span class="" style="left:41.6px;font-size:7.05px;transform:scaleX(0.8650)">FBXASC056FBXASC045</span><span class="" style="left:110.75px;font-size:7.05px;transform:scaleX(0.9322)">_Body_Head</span></div>
<div class="row" style="top:210.14px"><svg style="left:29.2px;top:2.4px" width="10" height="8" viewBox="0 0 10 8"><g fill="#d8d8d8"><path d="M5 0.2 L7 1.6 L5 3 L3 1.6 Z"/><path d="M2.4 2 L4.6 3.6 L2.4 5.2 L0.2 3.6 Z"/><path d="M7.6 2 L9.8 3.6 L7.6 5.2 L5.4 3.6 Z"/><path d="M5 4.2 L7.2 5.8 L5 7.4 L2.8 5.8 Z"/></g></svg><span class="" style="left:41.6px;font-size:7.05px;transform:scaleX(0.8650)">FBXASC053FBXASC045</span><span class="" style="left:110.75px;font-size:7.05px;transform:scaleX(0.9671)">_UniqueID_6</span></div>
<div class="row" style="top:222.46px"><svg style="left:29.2px;top:2.4px" width="10" height="8" viewBox="0 0 10 8"><g fill="#d8d8d8"><path d="M5 0.2 L7 1.6 L5 3 L3 1.6 Z"/><path d="M2.4 2 L4.6 3.6 L2.4 5.2 L0.2 3.6 Z"/><path d="M7.6 2 L9.8 3.6 L7.6 5.2 L5.4 3.6 Z"/><path d="M5 4.2 L7.2 5.8 L5 7.4 L2.8 5.8 Z"/></g></svg><span class="" style="left:41.6px;font-size:7.05px;transform:scaleX(0.8650)">FBXASC052FBXASC045</span><span class="" style="left:110.75px;font-size:7.05px;transform:scaleX(0.9671)">_UniqueID_6</span></div>
<div class="row" style="top:234.79px"><svg style="left:29.2px;top:2.4px" width="10" height="8" viewBox="0 0 10 8"><g fill="#d8d8d8"><path d="M5 0.2 L7 1.6 L5 3 L3 1.6 Z"/><path d="M2.4 2 L4.6 3.6 L2.4 5.2 L0.2 3.6 Z"/><path d="M7.6 2 L9.8 3.6 L7.6 5.2 L5.4 3.6 Z"/><path d="M5 4.2 L7.2 5.8 L5 7.4 L2.8 5.8 Z"/></g></svg><span class="" style="left:41.6px;font-size:7.05px;transform:scaleX(0.8650)">FBXASC050FBXASC045</span><span class="" style="left:110.75px;font-size:7.05px;transform:scaleX(0.9671)">_UniqueID_6</span></div>
<div class="row" style="top:247.11px"><svg style="left:22.2px;top:1.2px" width="10" height="10" viewBox="0 0 10 10"><circle cx="5" cy="5" r="4.4" fill="#3a3a3a" stroke="#bdbdbd" stroke-width="0.8"/><path d="M4.6 2.6 L7.4 2.2 L7.6 7 L5.4 7.4 Z" fill="#3aa3b3"/><circle cx="3.8" cy="6.2" r="1.6" fill="#d0d0d0"/></svg><span class="" style="left:34.4px;font-size:7.05px;transform:scaleX(1.0226)">defaultLightSet</span></div>
<div class="row" style="top:259.44px"><svg style="left:22.2px;top:1.2px" width="10" height="10" viewBox="0 0 10 10"><circle cx="5" cy="5" r="4.4" fill="#3a3a3a" stroke="#bdbdbd" stroke-width="0.8"/><path d="M4.6 2.6 L7.4 2.2 L7.6 7 L5.4 7.4 Z" fill="#3aa3b3"/><circle cx="3.8" cy="6.2" r="1.6" fill="#d0d0d0"/></svg><span class="" style="left:34.4px;font-size:7.05px;transform:scaleX(1.0187)">defaultObjectSet</span></div>
</div>
</body></html>
